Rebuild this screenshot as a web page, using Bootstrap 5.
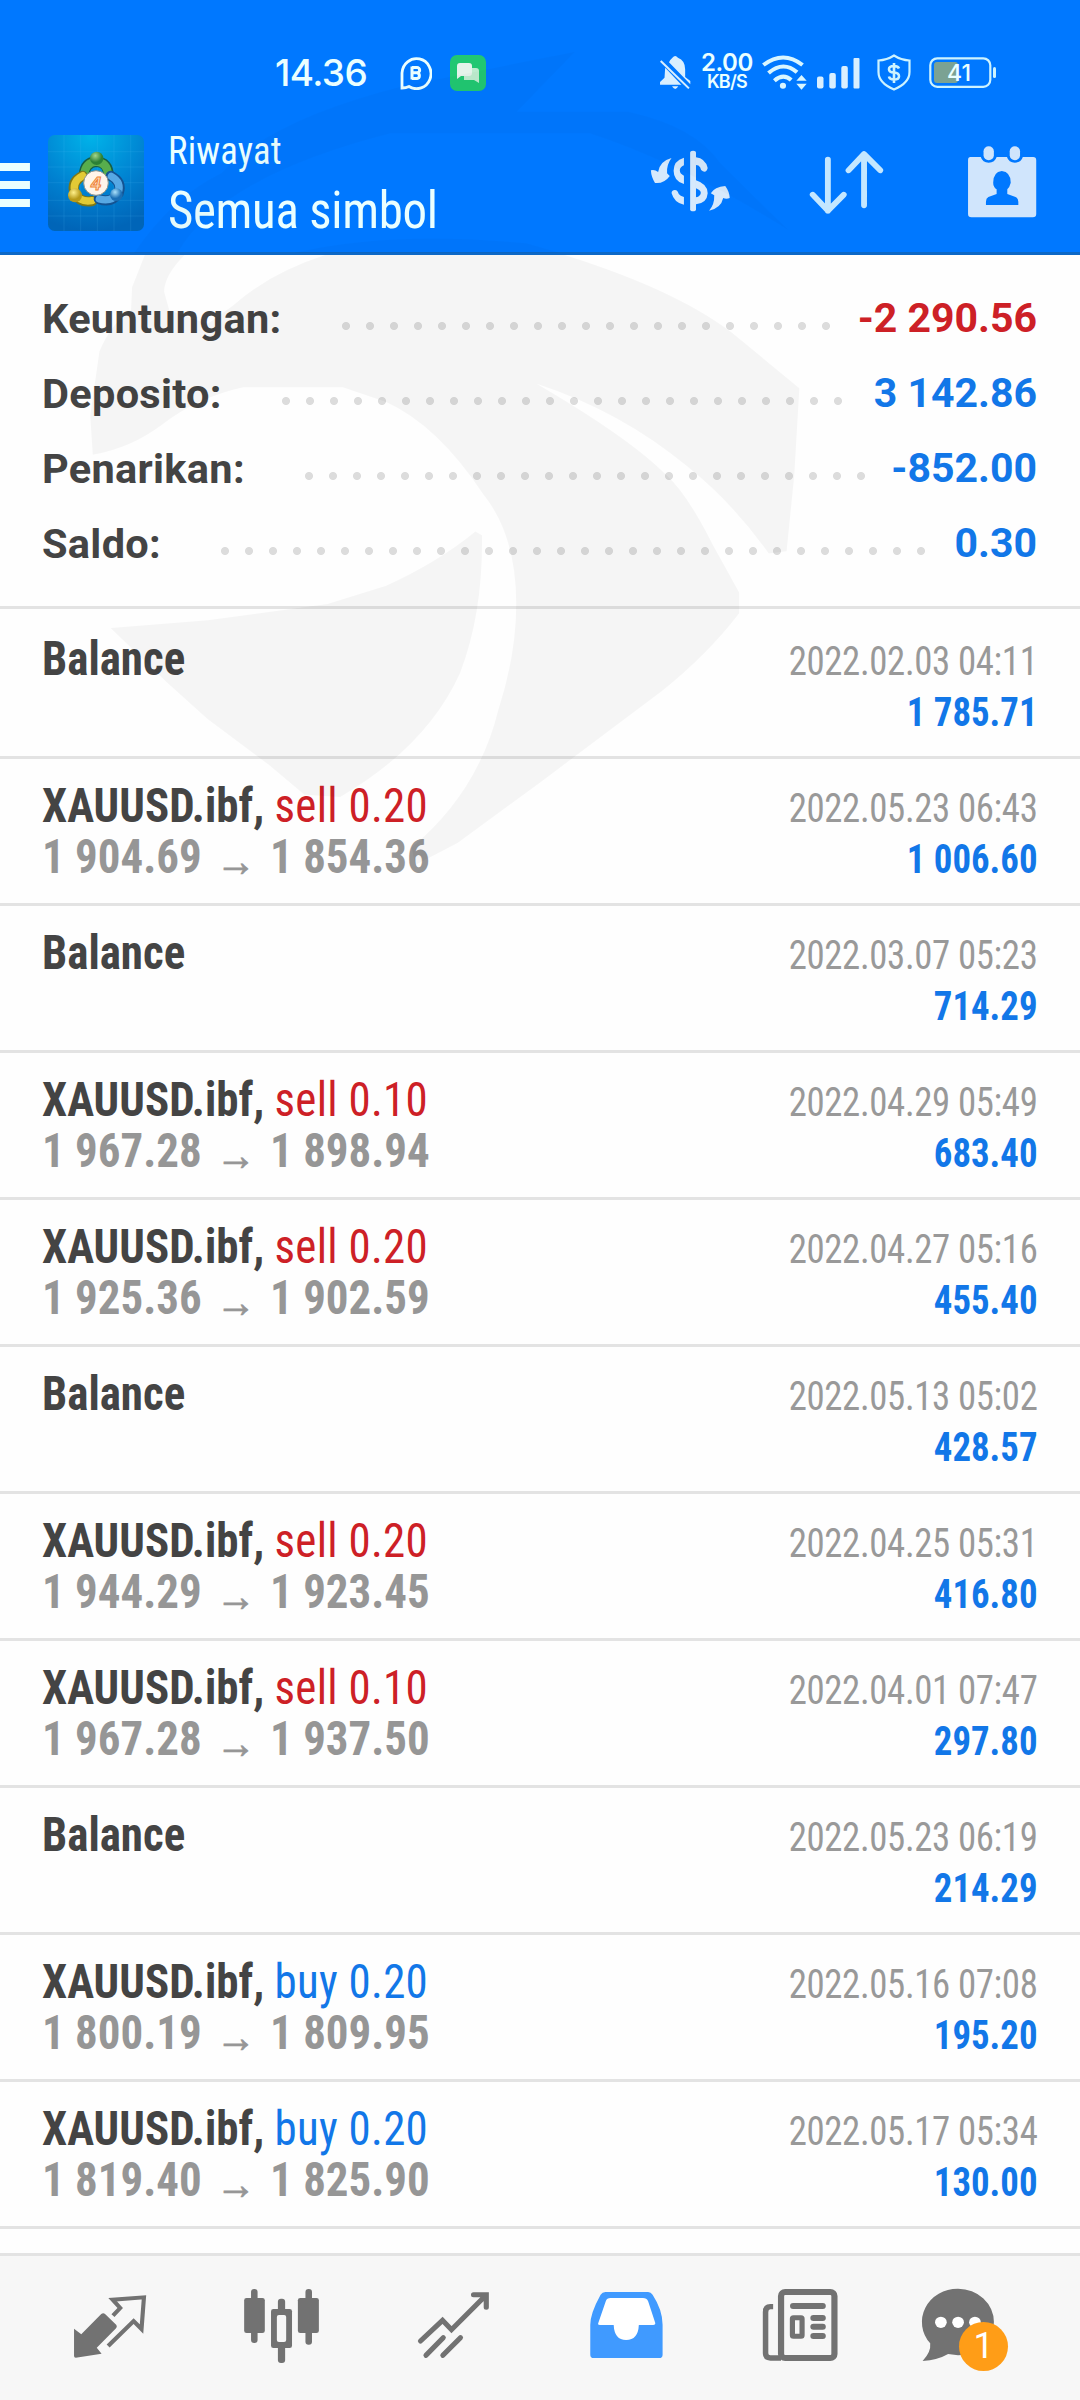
<!DOCTYPE html>
<html lang="id">
<head>
<meta charset="utf-8">
<meta name="viewport" content="width=device-width, initial-scale=1">
<title>Riwayat</title>
<link href="https://cdn.jsdelivr.net/npm/bootstrap@5.3.0/dist/css/bootstrap.min.css" rel="stylesheet">
<style>
  body { width: 1080px; height: 2400px; overflow: hidden; background: #fefefe; font-family: Roboto, sans-serif; color: #444; }
  svg { display: block; flex: none; }
  .app-head { background: #0078ff; height: 255px; border-bottom: 3px solid #0d68c6; color: #eaffff; }
  .status-strip { height: 110px; padding-top: 35px; }
  .clock-text { font: 500 37px/75px Inter, sans-serif; width: 125px; margin-left: 275px; letter-spacing: -.6px; }
  .net-rate { width: 56px; font: 600 24px/18px Inter, sans-serif; letter-spacing: -.4px; margin: 0 7px 0 8px; }
  .net-rate .rate-unit { font-size: 18px; line-height: 20px; letter-spacing: -.7px; }
  .tool-strip { height: 142px; }
  .head-text { width: 470px; margin-left: 24px; padding-top: 18px; font-family: "Roboto Condensed", Roboto, sans-serif; transform-origin: left; transform: scaleX(.94); }
  .head-text .sub-line { font-size: 39px; line-height: 46px; letter-spacing: .2px; }
  .head-text .main-line { font-size: 52px; line-height: 64px; margin-top: 5px; letter-spacing: -.35px; }
  .totals { height: 351px; padding: 26px 43px 0 42px; font-weight: 700; font-size: 41.5px; }
  .total-line { height: 75px; line-height: 75px; }
  .total-line .ms-auto { font-size: 41px; }
  .total-name { letter-spacing: .3px; }
  .dots { height: 8px; margin: 14px 0 0 60px; background: radial-gradient(circle at 4px 4px, #dcdcdc 3.6px, transparent 4.4px) 0 0 / 24px 8px repeat-x; }
  .deal { height: 147px; border-top: 3px solid #e3e3e3; padding: 21px 43px 0 42px; font-family: "Roboto Condensed", Roboto, sans-serif; white-space: nowrap; }
  .deal.first-deal { height: 150px; padding-top: 24px; }
  .deal-name { font-size: 48px; font-weight: 700; line-height: 51px; transform: scaleX(.936); transform-origin: left; }
  .deal-name .side { font-weight: 400; letter-spacing: .3px; }
  .deal-price { color: #969696; height: 51px; }
  .deal-price i { font: 400 43px/1 "Liberation Sans", sans-serif; margin: 0 4px; vertical-align: -3px; line-height: 0; -webkit-text-stroke: .8px #969696; }
  .deal-info { font-size: 40px; line-height: 51px; padding-top: 3px; color: #999; letter-spacing: -.38px; transform: scaleX(.92); transform-origin: right; }
  .deal-info b { color: #1277e8; display: block; letter-spacing: 0; }
  .up { color: #1277e8; } .down { color: #cd2026; }
  .tab-strip { background: #f7f7f7; border-top: 3px solid #e3e3e3; height: 147px; }
  .end-gap { border-top: 3px solid #e3e3e3; height: 27px; }
  .chat-count { position: absolute; left: 59px; top: 66px; width: 49px; height: 49px; font: 400 36px/49px Roboto, sans-serif; background: #ff9d17; color: #fff; }
  .emblem { position: absolute; left: 0; top: 0; pointer-events: none; }
</style>
</head>
<body class="position-relative m-0">
<header class="app-head">
  <div class="status-strip d-flex align-items-center">
    <div class="clock-text">14.36</div>
    <svg width="32" height="34" viewBox="0 0 32 34" fill="none" stroke="#eaffff" stroke-width="2.8"><path d="M2 32V17A14.500 15 0 1 1 9 30.500Q6 32 2 32Z"/><path stroke-width="3" d="M12 10.500V23.500M12 11.500H17A2.600 2.600 0 0 1 17 16.800H12M17 16.800A2.900 2.900 0 0 1 17 22.500H12"/></svg>
    <svg width="36" height="36" viewBox="0 0 36 36" style="margin-left:18px"><rect width="36" height="36" rx="7" fill="#21c772"/><path d="M14 13H26Q29 13 29 16V28L24 25H14Z" fill="#bdeccf"/><path d="M10 8H19Q22 8 22 11V18Q22 21 19 21H11L7 24V11Q7 8 10 8Z" fill="#e4f3ea"/></svg>
    <svg width="32" height="36" viewBox="345 162 93 108" preserveAspectRatio="none" style="margin-left:173px" fill="#d9efff"><path d="M384 170Q392 160 400 170Q421 178 421 205V228L436 240V250L374 184Q378 175 384 170Z"/><path d="M363 200L410 251H348V243L361 230Z"/><path d="M383 256H401Q392 272 383 256Z"/><path d="M350 180L432 262" stroke="#d9efff" stroke-width="6"/></svg>
    <div class="net-rate text-center"><div>2.00</div><div class="rate-unit">KB/S</div></div>
    <svg width="45" height="36" viewBox="641 162 131 108" preserveAspectRatio="none" fill="none" stroke="#d9f6ff" stroke-width="12"><path d="M645 192Q703 147 759 192M660 216Q703 178 743 214M677 239Q703 216 726 237"/><circle cx="702" cy="254" r="9" fill="#d9f6ff" stroke="none"/><path d="M756 222L771 239H741ZM756 266L771 248H741Z" fill="#d9f6ff" stroke="none"/></svg>
    <svg width="44" height="32" viewBox="0 0 44 32" style="margin-left:10px" fill="#d9efff"><rect y="19.500" width="6.500" height="12" rx="2"/><rect x="12.300" y="16" width="6.500" height="15.500" rx="2"/><rect x="24.300" y="9" width="6.500" height="22.500" rx="2"/><rect x="36.500" y="1" width="6" height="30.500" rx="1"/></svg>
    <svg width="34" height="37" viewBox="0 0 34 37" style="margin-left:16px" fill="none" stroke="#cdf3ff" stroke-width="2.200"><path d="M17 1.500Q24 6 32.500 6.500V18Q32.500 29 17 35.500Q1.500 29 1.500 18V6.500Q10 6 17 1.500Z"/><path stroke-width="2.600" d="M22 14.500Q21 12 17 12Q12 12 12 15.200Q12 18.200 17 18.500Q22 19 22 22.200Q22 25.500 17 25.500Q12.500 25.500 12 22.500M17 9V29"/></svg>
    <svg width="68" height="32" viewBox="0 0 68 32" style="margin-left:18px"><rect x="1.300" y="1.300" width="60" height="28.500" rx="7" fill="none" stroke="#cdf3ff" stroke-width="2.200"/><rect x="5" y="5" width="24" height="21" rx="3" fill="#7ba293"/><rect x="64" y="10" width="3" height="11" rx="1.500" fill="#cdf3ff"/><text x="30" y="24" text-anchor="middle" font-family="Inter" font-weight="500" font-size="23" fill="#eaffff">41</text></svg>
  </div>
  <div class="tool-strip d-flex">
    <svg width="48" height="142" viewBox="0 330 139.4 426" preserveAspectRatio="none" fill="#eaffff"><path d="M0 489H87V513H0ZM0 543H87V567H0ZM0 597H87V621H0Z"/></svg>
    <svg width="96" height="96" viewBox="24 30 288 288" style="margin-top:25px">
      <defs><radialGradient id="lg" cx=".45" cy="0" r="1"><stop offset="0" stop-color="#00b4ea"/><stop offset=".6" stop-color="#0080d0"/><stop offset="1" stop-color="#0065b8"/></radialGradient>
      <radialGradient id="gg" cx=".4" cy=".3"><stop offset="0" stop-color="#a5d68b"/><stop offset="1" stop-color="#2b8136"/></radialGradient>
      <radialGradient id="yg" cx=".4" cy=".3"><stop offset="0" stop-color="#fff08a"/><stop offset="1" stop-color="#b79a18"/></radialGradient>
      <radialGradient id="bg" cx=".4" cy=".3"><stop offset="0" stop-color="#a9e0fa"/><stop offset="1" stop-color="#1b6fb5"/></radialGradient></defs>
      <rect x="24" y="30" width="288" height="288" rx="20" fill="url(#lg)"/>
      <path d="M72 30V318M122 30V318M172 30V318M222 30V318M272 30V318M24 80H312M24 126H312M24 173H312M24 226H312M24 273H312" stroke="#5cc4f5" stroke-opacity=".22" stroke-width="2"/>
      <g stroke-linecap="round" fill="none">
        <path d="M132 152Q134 112 168 110Q206 112 205 152" stroke="#175f45" stroke-width="32"/><path d="M132 150Q136 112 168 110Q203 112 204 150" stroke="#58ad4c" stroke-width="24"/>
        <path d="M128 152Q92 170 104 205Q120 235 158 228" stroke="#7d7716" stroke-width="30"/><path d="M128 152Q94 170 106 205Q120 233 156 227" stroke="#e2ca35" stroke-width="22"/>
        <path d="M212 152Q248 170 236 205Q214 236 176 222" stroke="#145392" stroke-width="30"/><path d="M214 154Q246 172 234 205Q214 232 178 222" stroke="#57a8e4" stroke-width="22"/>
      </g>
      <circle cx="170" cy="100" r="20" fill="url(#gg)"/><circle cx="105" cy="211" r="21" fill="url(#yg)"/><circle cx="229" cy="209" r="19" fill="url(#bg)"/>
      <circle cx="168" cy="174" r="37" fill="#fff5ea" stroke="#8b938c" stroke-width="3"/>
      <text x="168" y="194" text-anchor="middle" font-family="Liberation Sans" font-size="54" font-weight="700" font-style="italic" fill="#ffe0bd" stroke="#ee8136" stroke-width="3">4</text>
    </svg>
    <div class="head-text"><div class="sub-line">Riwayat</div><div class="main-line">Semua simbol</div></div>
    <svg width="100" height="142" viewBox="284.6 330 290.4 426" preserveAspectRatio="none" fill="#d6e9fc"><path d="M436 458Q436 452 444.500 452Q453 452 453 458V628Q453 634 444.500 634Q436 634 436 628Z"/><path d="M418 473V496Q406 502 406 511Q406 522 418 527V552Q388 543 388 512Q388 482 418 473Z"/><path d="M453 472Q480 475 487 504Q484 518 473 514Q466 510 465 502Q461 495 453 495Z"/><path d="M453 541Q487 552 487 580Q485 610 453 613V592Q467 588 467 578Q466 570 453 565Z"/><path d="M382 579Q384 568 396 571Q401 575 403 582Q407 588 418 591V614Q390 609 382 579Z"/><path d="M382 474Q367 494 369 520L377 528Q360 552 334 549Q323 531 322 511Q333 508 343 516Q348 483 382 474Z"/><path d="M491 632Q507 614 506 586L496 580Q507 560 538 558Q550 575 551 594Q541 599 532 594Q526 624 491 632Z"/></svg>
    <svg width="110" height="142" viewBox="720.2 330 319.4 426" preserveAspectRatio="none" style="margin-left:50px" fill="none" stroke="#c4e7ff" stroke-width="17" stroke-linecap="round" stroke-linejoin="round"><path d="M836 479V632M792 584L836 632L882 584M941 616V462M896 511L941 462L988 511"/></svg>
    <svg width="130" height="142" viewBox="1184.800 330 377.500 426" preserveAspectRatio="none" style="margin-left:50px" fill="#d0e5fc"><path d="M1250 471H1280Q1285 488 1303 488Q1321 488 1326 471H1356Q1361 488 1379 488Q1397 488 1402 471H1432Q1441 471 1441 481V642Q1441 652 1431 652H1253Q1243 652 1243 642V481Q1243 471 1250 471Z"/><rect x="1288" y="439" width="30" height="42" rx="15"/><rect x="1364" y="439" width="30" height="42" rx="15"/><path fill="#0078ff" d="M1341 513Q1367 516 1367 548Q1364 561 1357 568V582L1381 591Q1389 595 1389 605V615H1295V605Q1295 595 1302 591L1326 582V568Q1316 561 1316 548Q1316 516 1341 513Z"/></svg>
  </div>
</header>

<section class="totals">
  <div class="total-line d-flex align-items-center"><span class="total-name">Keuntungan:</span><div class="dots" style="width:488px"></div><span class="down ms-auto">-2 290.56</span></div>
  <div class="total-line d-flex align-items-center"><span class="total-name">Deposito:</span><div class="dots" style="width:560px"></div><span class="up ms-auto">3 142.86</span></div>
  <div class="total-line d-flex align-items-center"><span class="total-name">Penarikan:</span><div class="dots" style="width:560px"></div><span class="up ms-auto">-852.00</span></div>
  <div class="total-line d-flex align-items-center"><span class="total-name">Saldo:</span><div class="dots" style="width:704px"></div><span class="up ms-auto">0.30</span></div>
</section>

<main>
  <div class="deal first-deal d-flex justify-content-between"><div class="deal-name">Balance</div><div class="deal-info text-end">2022.02.03 04:11<b>1 785.71</b></div></div>
  <div class="deal d-flex justify-content-between"><div class="deal-name">XAUUSD.ibf, <span class="side down">sell 0.20</span><div class="deal-price">1 904.69 <i>→</i> 1 854.36</div></div><div class="deal-info text-end">2022.05.23 06:43<b>1 006.60</b></div></div>
  <div class="deal d-flex justify-content-between"><div class="deal-name">Balance</div><div class="deal-info text-end">2022.03.07 05:23<b>714.29</b></div></div>
  <div class="deal d-flex justify-content-between"><div class="deal-name">XAUUSD.ibf, <span class="side down">sell 0.10</span><div class="deal-price">1 967.28 <i>→</i> 1 898.94</div></div><div class="deal-info text-end">2022.04.29 05:49<b>683.40</b></div></div>
  <div class="deal d-flex justify-content-between"><div class="deal-name">XAUUSD.ibf, <span class="side down">sell 0.20</span><div class="deal-price">1 925.36 <i>→</i> 1 902.59</div></div><div class="deal-info text-end">2022.04.27 05:16<b>455.40</b></div></div>
  <div class="deal d-flex justify-content-between"><div class="deal-name">Balance</div><div class="deal-info text-end">2022.05.13 05:02<b>428.57</b></div></div>
  <div class="deal d-flex justify-content-between"><div class="deal-name">XAUUSD.ibf, <span class="side down">sell 0.20</span><div class="deal-price">1 944.29 <i>→</i> 1 923.45</div></div><div class="deal-info text-end">2022.04.25 05:31<b>416.80</b></div></div>
  <div class="deal d-flex justify-content-between"><div class="deal-name">XAUUSD.ibf, <span class="side down">sell 0.10</span><div class="deal-price">1 967.28 <i>→</i> 1 937.50</div></div><div class="deal-info text-end">2022.04.01 07:47<b>297.80</b></div></div>
  <div class="deal d-flex justify-content-between"><div class="deal-name">Balance</div><div class="deal-info text-end">2022.05.23 06:19<b>214.29</b></div></div>
  <div class="deal d-flex justify-content-between"><div class="deal-name">XAUUSD.ibf, <span class="side up">buy 0.20</span><div class="deal-price">1 800.19 <i>→</i> 1 809.95</div></div><div class="deal-info text-end">2022.05.16 07:08<b>195.20</b></div></div>
  <div class="deal d-flex justify-content-between"><div class="deal-name">XAUUSD.ibf, <span class="side up">buy 0.20</span><div class="deal-price">1 819.40 <i>→</i> 1 825.90</div></div><div class="deal-info text-end">2022.05.17 05:34<b>130.00</b></div></div>
  <div class="end-gap"></div>
</main>

<nav class="tab-strip d-flex">
  <svg width="180" height="144" viewBox="0 168 522.700 432" preserveAspectRatio="none" fill="#727272"><path d="M215 386L236 403L294 342Q300 337 305 342L338 375Q341 380 337 385L281 443L295 461L220 473Q215 473 215 468Z"/><path d="M328 347L349 324L327 299L418 292L411 387L388 363L314 438" fill="none" stroke="#727272" stroke-width="12" stroke-linejoin="miter"/></svg>
  <svg width="180" height="144" viewBox="522.700 168 522.700 432" preserveAspectRatio="none" fill="#727272"><rect x="729" y="267" width="19" height="162" rx="9"/><rect x="709" y="294" width="60" height="105" rx="7"/><rect x="887" y="267" width="19" height="167" rx="9"/><rect x="865" y="294" width="61" height="105" rx="7"/><rect x="807" y="296" width="21" height="193" rx="9"/><rect x="787" y="327" width="61" height="117" rx="7"/><rect x="804" y="345" width="27" height="81" rx="6" fill="#f7f7f7"/></svg>
  <svg width="180" height="144" viewBox="1045.300 168 522.700 432" preserveAspectRatio="none" fill="none" stroke="#727272" stroke-width="15" stroke-linecap="round" stroke-linejoin="miter"><path d="M1221 423L1285 361L1311 389L1411 286M1375 284H1412V322M1237 466L1287 413M1286 466L1337 413"/></svg>
  <svg width="180" height="144" viewBox="0 168 522.700 432" preserveAspectRatio="none"><path fill="#409aff" d="M190 276H314Q322 276 327 284Q356 330 356 374V464Q356 474 346 474H156Q146 474 146 464V374Q146 340 176 284Q181 276 190 276Z"/><path fill="#fff" d="M205 294H299Q310 294 314 304L335 370Q335 375 329 375H287Q285 420 250 420Q216 420 214 375H174Q167 375 169 370L191 304Q194 294 205 294Z"/></svg>
  <svg width="180" height="144" viewBox="522.700 168 522.700 432" preserveAspectRatio="none" fill="none" stroke="#727272" stroke-width="18"><path stroke-width="16" d="M677 320H669Q655 320 655 336V460Q655 474 669 474H700"/><rect x="700" y="276" width="155" height="198" rx="12"/><path stroke-linecap="round" d="M735 318H821M794 354H821M794 380H821M794 408H821"/><rect x="733" y="353" width="28" height="56" rx="3" stroke-width="15"/></svg>
  <div class="position-relative">
    <svg width="180" height="144" viewBox="1045.300 168 522.700 432" preserveAspectRatio="none"><path fill="#727272" d="M1214 266A104 100 0 0 1 1318 366A104 100 0 0 1 1214 466L1185 462Q1155 480 1111 483Q1136 456 1133 430A104 100 0 0 1 1214 266Z"/><circle cx="1164" cy="367" r="17" fill="#fff"/><circle cx="1214" cy="367" r="17" fill="#fff"/><circle cx="1263" cy="367" r="17" fill="#fff"/></svg>
    <span class="chat-count rounded-circle text-center">1</span>
  </div>
</nav>

<svg class="emblem" width="1080" height="900" viewBox="0 0 1080 900" fill="#000">
  <g transform="translate(80 200) scale(.5102 .4592)" fill-opacity=".036">
    <path d="M25 555L20 470L38 330Q60 270 100 240L102 190L127 120H205Q165 165 165 200L175 240L250 270L300 230Q370 160 480 120H950Q1180 200 1290 300L1410 410L1400 600L1385 765L1350 770Q1280 660 1190 580Q1060 460 895 400Q1080 520 1150 600Q1190 640 1240 750L1292 855V900Q1230 990 1140 1070L900 1270L740 1400L657 1448L650 1410Q780 1290 820 1110Q855 990 855 880Q855 730 790 640Q700 490 600 440L515 408H320Q230 430 160 490Q100 540 25 555Z"/>
    <path d="M775 722Q700 790 600 840L485 880L250 915L60 932L170 1050L250 1130L370 1230L440 1295L510 1300Q680 1190 745 1030Q790 900 788 730Z"/>
  </g>
  <g transform="translate(100 30) scale(.4847 .3333)" fill-opacity=".018">
    <path d="M70 669Q150 500 250 430Q350 270 620 170L980 65L860 245H1090Q1230 290 1280 400L1420 600Q1200 400 1010 310H700L600 310Q250 440 160 669Z"/>
    <path d="M400 669Q600 600 880 640L950 669Z"/>
  </g>
</svg>
<script src="https://cdn.jsdelivr.net/npm/bootstrap@5.3.0/dist/js/bootstrap.bundle.min.js"></script>
</body>
</html>
